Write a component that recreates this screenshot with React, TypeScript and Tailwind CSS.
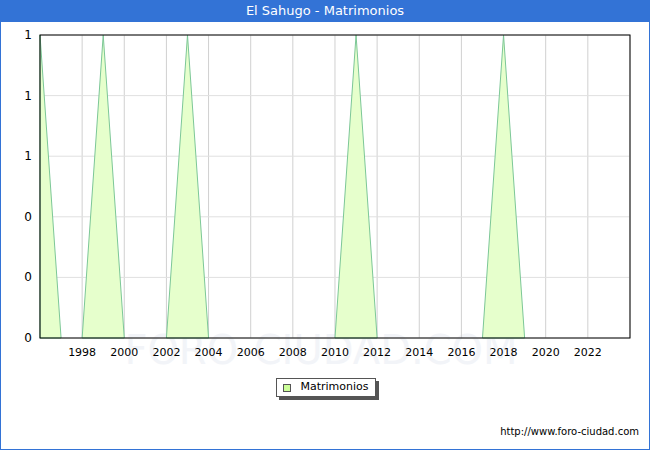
export default function App() {
  const x0 = 39
  const step = 21.07
  const top = 13
  const bot = 316
  const px = (yr: number) => x0 + (yr - 1996) * step
  const peaks = [1999, 2003, 2011, 2018]
  const years = Array.from({ length: 15 }, (_, i) => 1996 + i * 2)
  const hLines = [0, 1, 2, 3, 4, 5].map((i) => top + (i * (bot - top)) / 5)
  const yLabels = ["1", "1", "1", "0", "0", "0"]

  return (
    <div className="w-[650px] h-[450px] bg-white border-x border-b border-[#3373d6] flex flex-col" style={{ fontFamily: '"DejaVu Sans", sans-serif' }}>
      <div className="h-[22px] bg-[#3373d6] text-white text-[13px] flex items-center justify-center">El Sahugo - Matrimonios</div>
      <svg width={648} height={346} className="block">
        <text x={320} y={342} textAnchor="middle" fontSize={40} fill="#f2f4f8" fontFamily="DejaVu Sans">FORO-CIUDAD.COM</text>
        {years.map((y) => (
          <line key={y} x1={px(y)} x2={px(y)} y1={top} y2={bot} stroke="#d0d0d0" strokeWidth={1} />
        ))}
        {hLines.map((y, i) => (
          <line key={i} x1={x0} x2={629} y1={y} y2={y} stroke="#e0e0e0" strokeWidth={1} />
        ))}
        <polygon points={`${px(1996)},${bot} ${px(1996)},${top} ${px(1997)},${bot}`} fill="#e6ffcc" stroke="#7cc797" strokeWidth={1} />
        {peaks.map((p) => (
          <polygon key={p} points={`${px(p - 1)},${bot} ${px(p)},${top} ${px(p + 1)},${bot}`} fill="#e6ffcc" stroke="#7cc797" strokeWidth={1} />
        ))}
        <rect x={x0} y={top} width={629 - x0} height={bot - top} fill="none" stroke="#000" strokeWidth={1} />
        {hLines.map((y, i) => (
          <text key={i} x={31} y={y + 4} textAnchor="end" fontSize={12} fill="#000">{yLabels[i]}</text>
        ))}
        {years.filter((y) => y >= 1998 && y <= 2022).map((y) => (
          <text key={y} x={px(y)} y={334} textAnchor="middle" fontSize={11} fill="#000">{y}</text>
        ))}
      </svg>
      <div className="flex justify-center mt-[10px] ml-[2px]">
        <div className="relative">
          <div className="absolute left-[3px] top-[3px] w-full h-full bg-[#555]" />
          <div className="relative bg-white border border-[#555] h-[19px] px-[6px] flex items-center gap-[9px] text-[11px]">
            <span className="w-[8px] h-[8px] bg-[#ccff99] border border-[#555]" />
            <span>Matrimonios</span>
          </div>
        </div>
      </div>
      <div className="mt-auto mb-[10px] mr-[10px] text-right text-[10px]">http://www.foro-ciudad.com</div>
    </div>
  )
}
